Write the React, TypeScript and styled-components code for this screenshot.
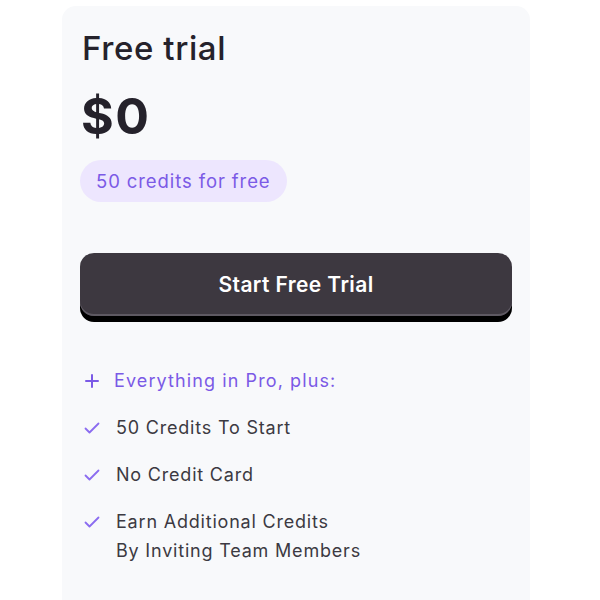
import React from 'react'
import styled, { createGlobalStyle } from 'styled-components'

const GlobalStyle = createGlobalStyle`
    body {
        margin: 0;
        background: #ffffff;
        font-family: Inter, "Noto Sans", sans-serif;
    }
`

const Card = styled.div`
    margin: 6px 0 0 62px;
    width: 468px;
    height: 620px;
    box-sizing: border-box;
    padding: 22px 18px 0 18px;
    background: #f8f9fb;
    border-radius: 14px;
    display: flex;
    flex-direction: column;
`

const Title = styled.h2`
    margin: 0 0 0 2px;
    font-size: 33px;
    line-height: 40px;
    font-weight: 500;
    color: #25222b;
    letter-spacing: 0.6px;
`

const Price = styled.div`
    margin: 20px 0 0 1px;
    font-size: 50px;
    line-height: 56px;
    font-weight: 700;
    color: #25222b;
    letter-spacing: 1.5px;
`

const Pill = styled.span`
    align-self: flex-start;
    margin-top: 16px;
    height: 42px;
    padding: 0 16px;
    border-radius: 21px;
    background: #ede6fe;
    color: #7b5ae6;
    font-size: 18.5px;
    display: flex;
    align-items: center;
    letter-spacing: 0.9px;
`

const Button = styled.button`
    margin-top: 51px;
    height: 63px;
    width: 100%;
    border: none;
    border-radius: 14px;
    background: #3d3840;
    color: #ffffff;
    font-family: inherit;
    font-size: 21px;
    font-weight: 600;
    letter-spacing: 0.4px;
    box-shadow: inset 0 -2px 0 #5e5962, 0 6px 0 #000000;
    cursor: pointer;
`

const List = styled.ul`
    list-style: none;
    margin: 50px 0 0 0;
    padding: 0 0 0 4px;
    display: flex;
    flex-direction: column;
    gap: 18px;
`

const Item = styled.li<{ $accent?: boolean }>`
    display: flex;
    align-items: flex-start;
    gap: ${p => (p.$accent ? '14px' : '16px')};
    font-size: 18px;
    line-height: 29px;
    color: ${p => (p.$accent ? '#7b5ae6' : '#3c3a42')};
    letter-spacing: ${p => (p.$accent ? '1.1px' : '0.8px')};
`

const ItemText = styled.span`
    white-space: pre-line;
`

const IconBox = styled.span`
    width: 16px;
    height: 29px;
    display: flex;
    align-items: center;
    justify-content: center;
    flex-shrink: 0;
`

const PlusIcon = () => (
    <svg width="14" height="14" viewBox="0 0 14 14">
        <path d="M7 1v12M1 7h12" stroke="#7b5ae6" strokeWidth="2" strokeLinecap="round" />
    </svg>
)

const CheckIcon = () => (
    <svg width="16" height="12" viewBox="0 0 16 12">
        <path d="M1.5 6.5l4 4L14.5 1.5" stroke="#8b6cf0" strokeWidth="1.8" fill="none" strokeLinecap="round" strokeLinejoin="round" />
    </svg>
)

const features = [
    '50 Credits To Start',
    'No Credit Card',
    'Earn Additional Credits\nBy Inviting Team Members',
]

const App = () => {
    return (
        <>
            <GlobalStyle />
            <Card>
                <Title>Free trial</Title>
                <Price>$0</Price>
                <Pill>50 credits for free</Pill>
                <Button>Start Free Trial</Button>
                <List>
                    <Item $accent>
                        <IconBox><PlusIcon /></IconBox>
                        <ItemText>Everything in Pro, plus:</ItemText>
                    </Item>
                    {features.map(f => (
                        <Item key={f}>
                            <IconBox><CheckIcon /></IconBox>
                            <ItemText>{f}</ItemText>
                        </Item>
                    ))}
                </List>
            </Card>
        </>
    )
}

export default App
